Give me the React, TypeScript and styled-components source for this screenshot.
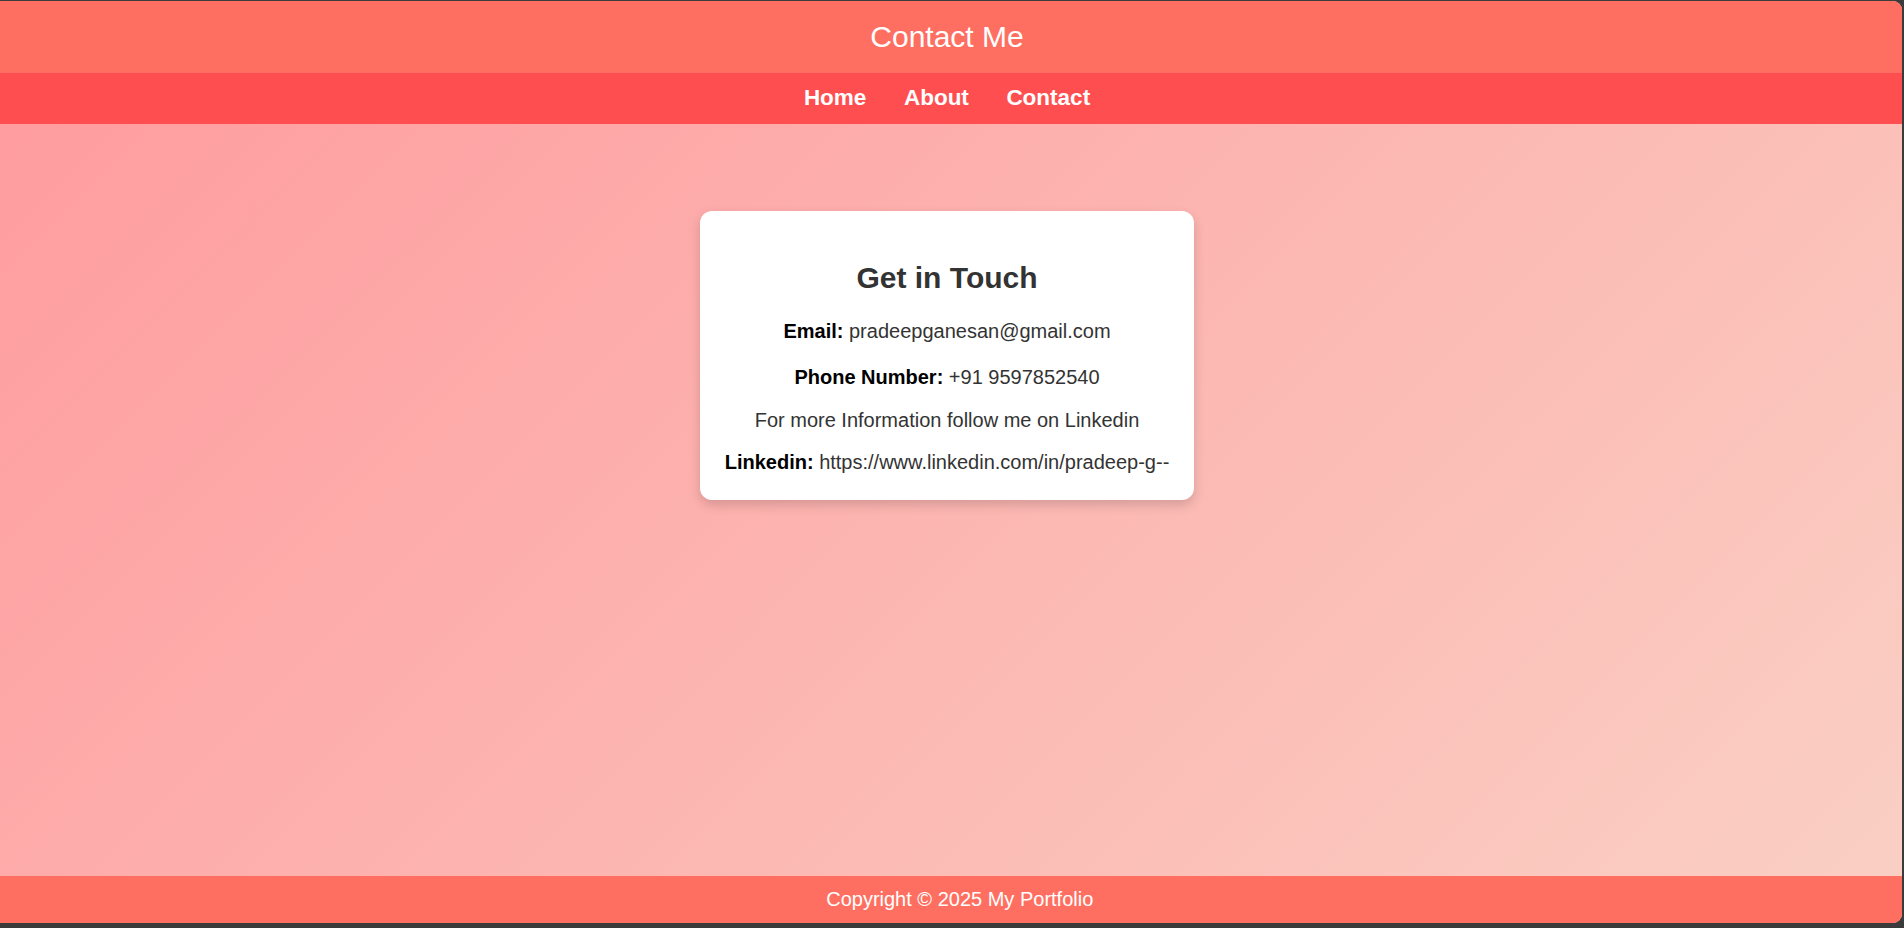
import React from "react";
import styled, { createGlobalStyle } from "styled-components";

const GlobalStyle = createGlobalStyle`
  html, body {
    margin: 0;
    padding: 0;
    background: #3b3b3b;
    font-family: "Liberation Sans", Arial, sans-serif;
  }
  * { box-sizing: border-box; }
`;

const Frame = styled.div`
  width: 1904px;
  height: 928px;
  padding: 1px 2px 5px 0;
  background: #3b3b3b;
`;

const Window = styled.div`
  height: 100%;
  display: flex;
  flex-direction: column;
  overflow: hidden;
  border-radius: 0 9px 9px 0;
  background: linear-gradient(135deg, #ff9a9e 0%, #fad0c4 100%);
`;

const Header = styled.header`
  height: 72px;
  padding: 18.5px 8px 0 0;
  background: #ff6f61;
  text-align: center;
`;

const Title = styled.h1`
  margin: 0;
  font-size: 30px;
  line-height: 34px;
  font-weight: 400;
  color: #ffffff;
`;

const Nav = styled.nav`
  height: 51px;
  padding: 11.5px 8px 0 0;
  background: #ff4e50;
  display: flex;
  justify-content: center;
`;

const NavLink = styled.a`
  margin: 0 18.75px;
  font-size: 22.5px;
  line-height: 26px;
  font-weight: 700;
  color: #ffffff;
  text-decoration: none;
`;

const Main = styled.main`
  flex: 1;
  display: flex;
  justify-content: center;
  align-items: flex-start;
  padding: 87px 8px 0 0;
`;

const Card = styled.section`
  background: #ffffff;
  border-radius: 12px;
  padding: 25px 25px 26px;
  box-shadow: 0 5px 12px rgba(0, 0, 0, 0.16);
  text-align: center;
`;

const CardTitle = styled.h2`
  margin: 24.5px 0 25px;
  font-size: 30px;
  line-height: 34px;
  font-weight: 700;
  color: #333333;
`;

const Line = styled.p<{ $after: number }>`
  margin: 0 0 ${(p) => p.$after}px;
  font-size: 20px;
  line-height: 23px;
  color: #333333;
  white-space: nowrap;
`;

const Label = styled.strong`
  font-weight: 700;
  color: #000000;
`;

const Footer = styled.footer`
  height: 47px;
  padding: 12px 0 0 17.5px;
  background: #ff6f61;
  text-align: center;
  font-size: 20px;
  line-height: 23px;
  color: #ffffff;
`;

export default function App() {
  return (
    <>
      <GlobalStyle />
      <Frame>
        <Window>
          <Header>
            <Title>Contact Me</Title>
          </Header>
          <Nav>
            <NavLink href="#">Home</NavLink>
            <NavLink href="#">About</NavLink>
            <NavLink href="#">Contact</NavLink>
          </Nav>
          <Main>
            <Card>
              <CardTitle>Get in Touch</CardTitle>
              <Line $after={23.5}>
                <Label>Email:</Label> pradeepganesan@gmail.com
              </Line>
              <Line $after={19.5}>
                <Label>Phone Number:</Label> +91 9597852540
              </Line>
              <Line $after={19.5}>For more Information follow me on Linkedin</Line>
              <Line $after={0}>
                <Label>Linkedin:</Label> https://www.linkedin.com/in/pradeep-g--
              </Line>
            </Card>
          </Main>
          <Footer>Copyright © 2025 My Portfolio</Footer>
        </Window>
      </Frame>
    </>
  );
}
